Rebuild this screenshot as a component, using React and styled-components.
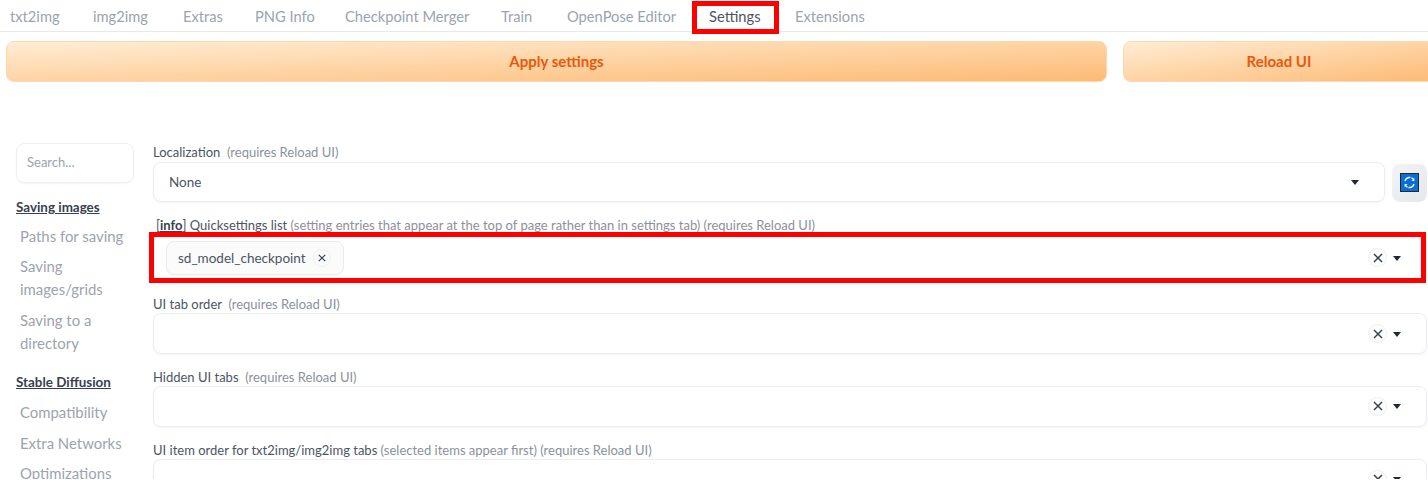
import React from "react";
import styled, { createGlobalStyle } from "styled-components";

const Global = createGlobalStyle`
  html, body { margin: 0; padding: 0; background: #fff; overflow: hidden; }
  body { font-family: "Lato", "Noto Sans", sans-serif; width: 1428px; height: 486px; }
  #root { width: 1428px; height: 486px; overflow: hidden; }
`;
const Page = styled.div`position: relative; width: 1428px; height: 479px; overflow: hidden;`;
const TabBar = styled.nav`display: flex; height: 31px; border-bottom: 1px solid #e8e9ec; box-sizing: content-box; padding-left: 10px;`;
const Tab = styled.span`
  width: ${p => p.$w}px; margin-right: 33px; flex: none; line-height: 33px; font-size: 14.7px; white-space: nowrap;
  color: ${p => (p.$active ? "#4b5563" : "#9ca3af")};
`;
const Actions = styled.div`display: flex; gap: 16px; width: 1430px; margin: 9px 0 0 6px;`;
const Action = styled.button`
  height: 41px; flex: none; width: ${p => p.$w}px; padding: 0 0 2px; border: 1px solid #fed7aa; border-radius: 8px;
  background: linear-gradient(to bottom right, #ffedd5, #fdba74); color: #ea580c;
  font: 700 15px "Lato", sans-serif;
`;
const Body = styled.div`display: flex; margin-top: 61px; padding-left: 16px;`;
const Sidebar = styled.aside`width: 118px; flex: none; margin-right: 19px;`;
const Search = styled.div`
  height: 40px; border: 1px solid #eceef1; border-radius: 8px; padding-left: 10px; box-sizing: border-box;
  box-shadow: 0 1px 2px rgba(0,0,0,.04); line-height: 37px; font-size: 13px; color: #9ca3af;
`;
const Group = styled.div`
  margin: ${p => p.$top}px 0 ${p => p.$bottom}px; font-size: 13.4px; line-height: 18px; font-weight: 700; color: #374151; text-decoration: underline;
`;
const Item = styled.div`
  margin: 0 0 7.4px 4px; font-size: 14.9px; line-height: 23px; color: #9ca3af; width: 112px;
`;
const Main = styled.main`flex: 1; min-width: 0; padding-top: .2px;`;
const Label = styled.div`
  height: 18.4px; line-height: 19px; font-size: 13px; color: #4b5563; white-space: pre;
  ${p => p.$indent ? "margin-left: 3px;" : ""}
`;
const Hint = styled.span`color: #8b919c;`;
const Info = styled.a`font-weight: 700; color: #374151; text-decoration: underline;`;
const Row = styled.div`display: flex; gap: 7px; height: ${p => p.$h || 54.4}px;`;
const Field = styled.div`
  height: ${p => p.$h || 40.5}px; box-sizing: border-box; border: 1px solid #eceef1; border-radius: 8px; background: #fff;
  box-shadow: 0 1px 2px rgba(0,0,0,.05); display: flex; align-items: center; padding: 0 25px 0 15px;
  font-size: 13.5px; color: #4b5563; width: ${p => p.$w || 1274}px; flex: none;
`;
const Grow = styled.div`flex: 1; display: flex; align-items: center;`;
const Caret = styled.i`width: 0; height: 0; border: 4px solid transparent; border-top: 5px solid #1f2937; border-bottom: 0; flex: none; margin-top: 1px;`;
const Clear = styled.span`
  width: 19px; height: 19px; border-radius: 50%; border: 1px solid #eceef1; box-sizing: border-box; display: flex; align-items: center; justify-content: center;
  margin-right: 6px; flex: none;
`;
const Chip = styled.span`
  height: 34px; margin-left: -3px; width: 178px; box-sizing: border-box; border: 1px solid #e9ebee; border-radius: 8px; background: #fbfbfc; display: flex; align-items: center;
  padding: 0 12px 0 11px; justify-content: space-between; color: #4b5563; font-size: 13.5px; box-shadow: 0 1px 1px rgba(0,0,0,.03);
`;
const ChipClear = styled.span`width: 16px; height: 16px; border-radius: 50%; border: 1px solid #eef0f2; display: flex; align-items: center; justify-content: center;`;
const Refresh = styled.button`
  width: 35px; height: 38px; margin-top: 2px; padding: 0 1px 0 0; border: 0; border-radius: 8px; background: linear-gradient(to bottom right, #f3f4f6, #e5e7eb);
  display: flex; align-items: center; justify-content: center; flex: none;
`;
const RedBox = styled.div`
  position: absolute; box-sizing: border-box; border: 5px solid #ff0000; pointer-events: none;
  left: ${p => p.$x}px; top: ${p => p.$y}px; width: ${p => p.$w}px; height: ${p => p.$h}px;
`;

const Times = ({ s = 10, w = 1.5 }) => (
  <svg width={s} height={s} viewBox="0 0 10 10" fill="none" stroke="#374151" strokeWidth={w}><path d="M1 1l8 8M9 1l-8 8" /></svg>
);
const RefreshIcon = () => (
  <svg width="19" height="19" viewBox="0 0 19 19">
    <rect x=".5" y=".5" width="18" height="18" fill="#0a6fd1" stroke="#1f2937" />
    <g fill="none" stroke="#eaf4ff" strokeWidth="1.4">
      <path d="M5 8A4.8 4.8 0 0 1 13.6 6.6" strokeDasharray="7 1 3" />
      <path d="M14 11A4.8 4.8 0 0 1 5.4 12.4" strokeDasharray="7 1 3" />
    </g>
    <path d="M14.4 5v3h-3z M4.6 14v-3h3z" fill="#eaf4ff" />
  </svg>
);

const tabs = [["txt2img", 50], ["img2img", 57], ["Extras", 39], ["PNG Info", 57], ["Checkpoint Merger", 123], ["Train", 33], ["OpenPose Editor", 109], ["Settings", 53, true], ["Extensions", 70]];

const MultiEnd = () => (<><Clear><Times s={10} /></Clear><Caret /></>);

export default function App() {
  return (
    <Page>
      <Global />
      <TabBar>
        {tabs.map(([t, w, a]) => <Tab key={t} $w={w} $active={a}>{t}</Tab>)}
      </TabBar>
      <Actions>
        <Action $w={1101}>Apply settings</Action>
        <Action $w={312}>Reload UI</Action>
      </Actions>
      <Body>
        <Sidebar>
          <Search>Search...</Search>
          <Group $top={15} $bottom={9}>Saving images</Group>
          <Item>Paths for saving</Item>
          <Item>Saving images/grids</Item>
          <Item>Saving to a directory</Item>
          <Group $top={18.7} $bottom={10}>Stable Diffusion</Group>
          <Item>Compatibility</Item>
          <Item>Extra Networks</Item>
          <Item>Optimizations</Item>
        </Sidebar>
        <Main>
          <Label>Localization  <Hint>(requires Reload UI)</Hint></Label>
          <Row>
            <Field $w={1232}><Grow>None</Grow><Caret /></Field>
            <Refresh><RefreshIcon /></Refresh>
          </Row>
          <Label $indent>[<Info>info</Info>] Quicksettings list <Hint>(setting entries that appear at the top of page rather than in settings tab) (requires Reload UI)</Hint></Label>
          <Row $h={60.6}>
            <Field $h={47}><Grow><Chip>sd_model_checkpoint<ChipClear><Times s={8} /></ChipClear></Chip></Grow><MultiEnd /></Field>
          </Row>
          <Label>UI tab order  <Hint>(requires Reload UI)</Hint></Label>
          <Row><Field><Grow /><MultiEnd /></Field></Row>
          <Label>Hidden UI tabs  <Hint>(requires Reload UI)</Hint></Label>
          <Row><Field><Grow /><MultiEnd /></Field></Row>
          <Label>UI item order for txt2img/img2img tabs <Hint>(selected items appear first) (requires Reload UI)</Hint></Label>
          <Row><Field><Grow /><MultiEnd /></Field></Row>
        </Main>
      </Body>
      <RedBox $x={692} $y={1} $w={87} $h={33} />
      <RedBox $x={149} $y={232} $w={1277} $h={51} />
    </Page>
  );
}
